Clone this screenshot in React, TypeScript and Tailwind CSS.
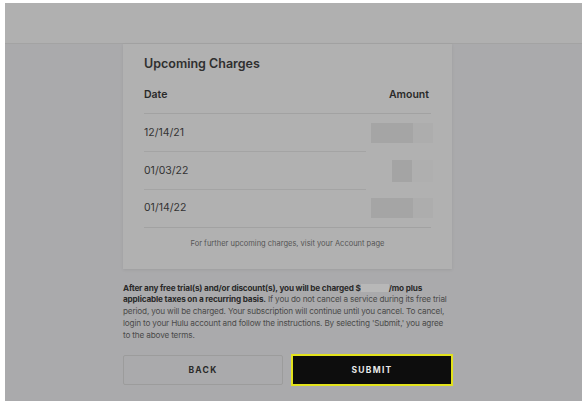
const rows = [
  { date: "12/14/21", blur: "wide" },
  { date: "01/03/22", blur: "narrow" },
  { date: "01/14/22", blur: "wide" },
];

function BlurAmount({ kind }: { kind: string }) {
  if (kind === "narrow") {
    return (
      <div className="flex h-[22px] w-[62px] justify-end">
        <div className="h-full w-[20px] bg-[#a4a4a4]" />
        <div className="h-full w-[21px] bg-[#afafaf]" />
      </div>
    );
  }
  return (
    <div className="flex h-[20px] w-[62px]">
      <div className="h-full w-[42px] bg-[#a5a5a5]" />
      <div className="h-full w-[20px] bg-[#adadad]" />
    </div>
  );
}

export default function App() {
  return (
    <div className="h-[405px] w-[585px] bg-white pl-[5px] pt-[3px] font-['Inter',sans-serif]">
      <div className="flex h-[398px] w-[577px] flex-col bg-[#aaaaac]">
        <div className="h-[41px] border-b border-[#a3a3a3] bg-[#b0b0b0]" />
        <div className="flex flex-col pl-[118px]">
          <div className="w-[329px] bg-[#b1b1b1] px-[21px] pt-[11px] pb-[20px] shadow-[0_1px_3px_rgba(0,0,0,0.08)]">
            <h2 className="text-[12.5px] font-semibold text-[#2f2f2f]">Upcoming Charges</h2>
            <div className="mt-[13px] flex items-center justify-between border-b border-[#a2a2a2] pb-[10px] pr-[2px] text-[10.5px] font-semibold text-[#2a2a2a]">
              <span>Date</span>
              <span>Amount</span>
            </div>
            {rows.map((r, i) => (
              <div
                key={r.date}
                className={
                  i === rows.length - 1
                    ? "flex h-[38px] items-center justify-between border-b border-[#a2a2a2]"
                    : "relative flex h-[38px] items-center justify-between"
                }
              >
                <span className="text-[10.5px] text-[#333]">{r.date}</span>
                <div className="-mr-[2px]">
                  <BlurAmount kind={r.blur} />
                </div>
                {i !== rows.length - 1 && (
                  <div className="absolute bottom-0 left-0 h-px w-[222px] bg-[#a4a4a4]" />
                )}
              </div>
            ))}
            <p className="mt-[10px] text-center text-[7.5px] text-[#555]">
              For further upcoming charges, visit your Account page
            </p>
          </div>
          <p className="mt-[14px] w-[329px] text-[8.2px] leading-[11.7px] tracking-[-0.02em] text-[#4a4a4a]">
            <span className="font-bold text-[#2a2a2a]">
              After any free trial(s) and/or discount(s), you will be charged $
              <span className="inline-block h-[8px] w-[28px] align-[-1px] bg-[#b8b8b8]" />
              /mo plus applicable taxes on a recurring basis.
            </span>{" "}
            If you do not cancel a service during its free trial period, you will be charged. Your subscription will continue until you cancel. To cancel, login to your Hulu account and follow the instructions. By selecting 'Submit,' you agree to the above terms.
          </p>
          <div className="mt-[14px] flex w-[330px] gap-[8px]">
            <button className="flex h-[30px] w-[160px] items-center justify-center rounded-[2px] border border-[#9c9c9c] text-[8.5px] font-bold tracking-[0.15em] text-[#2a2a2a]">
              BACK
            </button>
            <button className="-mt-px flex h-[32px] w-[162px] items-center justify-center border-2 border-[#e2e21c] bg-[#0d0d0d] text-[8.5px] font-bold tracking-[0.15em] text-[#e8e8e8]">
              SUBMIT
            </button>
          </div>
        </div>
      </div>
    </div>
  );
}
